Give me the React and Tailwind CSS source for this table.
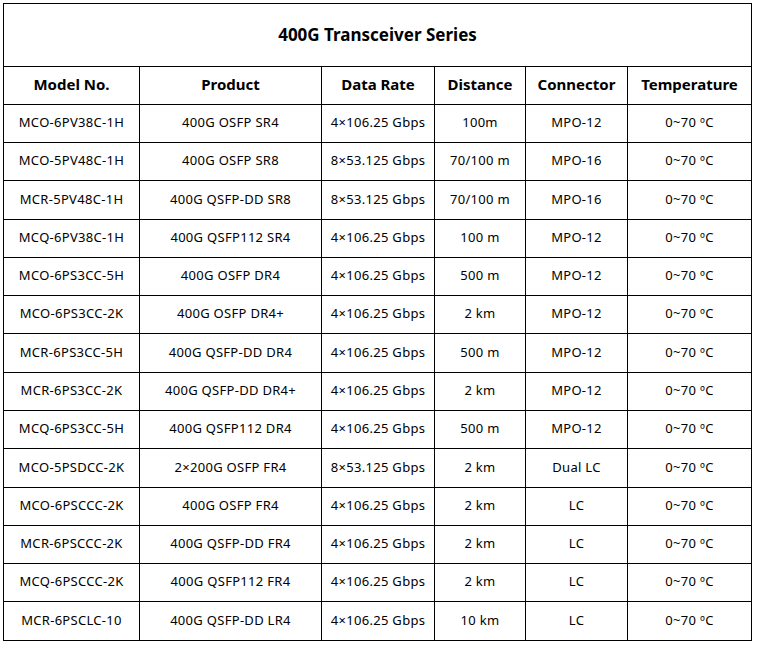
import React from "react";

const rows = [
  ["MCO-6PV38C-1H", "400G OSFP SR4", "4×106.25 Gbps", "100m", "MPO-12"],
  ["MCO-5PV48C-1H", "400G OSFP SR8", "8×53.125 Gbps", "70/100 m", "MPO-16"],
  ["MCR-5PV48C-1H", "400G QSFP-DD SR8", "8×53.125 Gbps", "70/100 m", "MPO-16"],
  ["MCQ-6PV38C-1H", "400G QSFP112 SR4", "4×106.25 Gbps", "100 m", "MPO-12"],
  ["MCO-6PS3CC-5H", "400G OSFP DR4", "4×106.25 Gbps", "500 m", "MPO-12"],
  ["MCO-6PS3CC-2K", "400G OSFP DR4+", "4×106.25 Gbps", "2 km", "MPO-12"],
  ["MCR-6PS3CC-5H", "400G QSFP-DD DR4", "4×106.25 Gbps", "500 m", "MPO-12"],
  ["MCR-6PS3CC-2K", "400G QSFP-DD DR4+", "4×106.25 Gbps", "2 km", "MPO-12"],
  ["MCQ-6PS3CC-5H", "400G QSFP112 DR4", "4×106.25 Gbps", "500 m", "MPO-12"],
  ["MCO-5PSDCC-2K", "2×200G OSFP FR4", "8×53.125 Gbps", "2 km", "Dual LC"],
  ["MCO-6PSCCC-2K", "400G OSFP FR4", "4×106.25 Gbps", "2 km", "LC"],
  ["MCR-6PSCCC-2K", "400G QSFP-DD FR4", "4×106.25 Gbps", "2 km", "LC"],
  ["MCQ-6PSCCC-2K", "400G QSFP112 FR4", "4×106.25 Gbps", "2 km", "LC"],
  ["MCR-6PSCLC-10", "400G QSFP-DD LR4", "4×106.25 Gbps", "10 km", "LC"],
];

const headers = ["Model No.", "Product", "Data Rate", "Distance", "Connector", "Temperature"];

export default function App() {
  return (
    <div className="w-[757px] h-[645px] bg-white pl-[3px] pt-[3px]" style={{ fontFamily: '"Noto Sans", "Open Sans", sans-serif' }}>
      <div className="w-[749px] bg-black p-px grid gap-px grid-cols-[135px_181px_112px_90px_101px_123px] grid-rows-[62px_37px_37px_37px_38px_37px_37px_37px_38px_37px_37px_38px_37px_37px_37px_38px] text-black">
        <div className="col-span-6 bg-white flex items-center justify-center text-[17px] font-bold pb-[1px]">
          400G Transceiver Series
        </div>
        {headers.map((h) => (
          <div key={h} className="bg-white flex items-center justify-center text-[15px] font-bold pb-[2px]">
            {h}
          </div>
        ))}
        {rows.map((r, i) => (
          <React.Fragment key={i}>
            {r.map((c, j) => (
              <div key={j} className="bg-white flex items-center justify-center text-[13px] tracking-[0.3px] pb-[1px]">
                {c}
              </div>
            ))}
            <div className="bg-white flex items-center justify-center text-[13px] tracking-[0.3px] pb-[1px]">0~70 ºC</div>
          </React.Fragment>
        ))}
      </div>
    </div>
  );
}
